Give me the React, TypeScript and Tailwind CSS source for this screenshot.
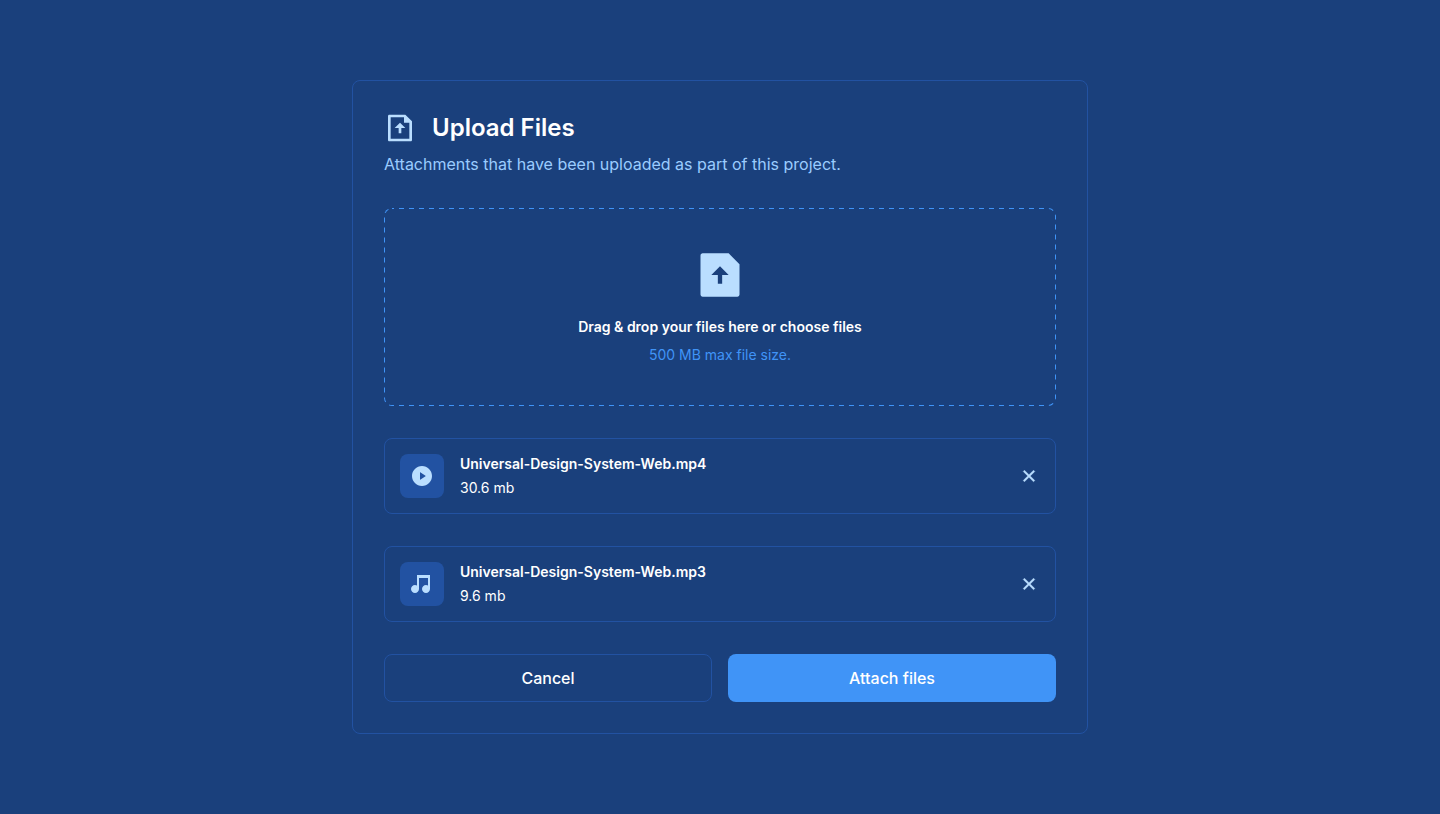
import { useState } from "react";
import {
    RiCloseLine,
    RiFileUploadFill,
    RiFileUploadLine,
    RiMusic2Fill,
    RiPlayCircleFill,
} from "react-icons/ri";

const archivos = [
    { nombre: "Universal-Design-System-Web.mp4", peso: "30.6 mb", Icono: RiPlayCircleFill },
    { nombre: "Universal-Design-System-Web.mp3", peso: "9.6 mb", Icono: RiMusic2Fill },
];

const DropZone = () => (
    <label
        htmlFor="files"
        className="relative flex cursor-pointer flex-col items-center overflow-hidden rounded-lg py-[41px] text-center text-sm"
    >
        {/* the outer half of the stroke is clipped, which leaves a 1px dashed line */}
        <svg className="pointer-events-none absolute inset-0 size-full" aria-hidden="true">
            <rect
                width="100%"
                height="100%"
                rx="8"
                fill="none"
                stroke="#4094f7"
                strokeWidth="2"
                strokeDasharray="5 5"
                strokeDashoffset="3"
            />
        </svg>
        <RiFileUploadFill className="size-[52px] text-[#badeff]" />
        <span className="mt-4 font-semibold text-white">Drag &amp; drop your files here or choose files</span>
        <span className="mt-2 text-[#4094f7]">500 MB max file size.</span>
        <input id="files" type="file" multiple className="sr-only" />
    </label>
);

export default function App() {
    const [lista, setLista] = useState(archivos);

    return (
        <main className="flex min-h-screen items-center justify-center bg-[#1a407c] px-4 py-20 font-['Inter',sans-serif]">
            <section className="flex w-full max-w-[736px] flex-col gap-8 rounded-lg border border-[#2252a2] p-[31px]">
                <header>
                    <div className="flex items-center gap-4">
                        <RiFileUploadLine className="size-8 text-[#badeff]" />
                        <h1 className="text-2xl font-semibold text-white">Upload Files</h1>
                    </div>
                    <p className="mt-2 text-base text-[#9accff]">
                        Attachments that have been uploaded as part of this project.
                    </p>
                </header>

                <DropZone />

                {lista.map(({ nombre, peso, Icono }) => (
                    <article key={nombre} className="flex items-center gap-4 rounded-lg border border-[#2252a2] p-[15px]">
                        <div className="flex size-11 items-center justify-center rounded-lg bg-[#2252a2]">
                            <Icono className="size-6 text-[#badeff]" />
                        </div>
                        <div className="flex-1 text-sm text-white">
                            <h2 className="font-semibold">{nombre}</h2>
                            <p className="mt-1">{peso}</p>
                        </div>
                        <button
                            type="button"
                            aria-label={`Remove ${nombre}`}
                            onClick={() => setLista(lista.filter((a) => a.nombre !== nombre))}
                            className="cursor-pointer text-[#badeff]"
                        >
                            <RiCloseLine className="size-[22px] stroke-current stroke-[0.4]" />
                        </button>
                    </article>
                ))}

                <div className="grid grid-cols-2 gap-4 text-base font-medium text-white">
                    <button type="button" className="h-12 cursor-pointer rounded-lg border border-[#2252a2]">
                        Cancel
                    </button>
                    <button type="button" className="h-12 cursor-pointer rounded-lg bg-[#4094f7]">
                        Attach files
                    </button>
                </div>
            </section>
        </main>
    );
}
